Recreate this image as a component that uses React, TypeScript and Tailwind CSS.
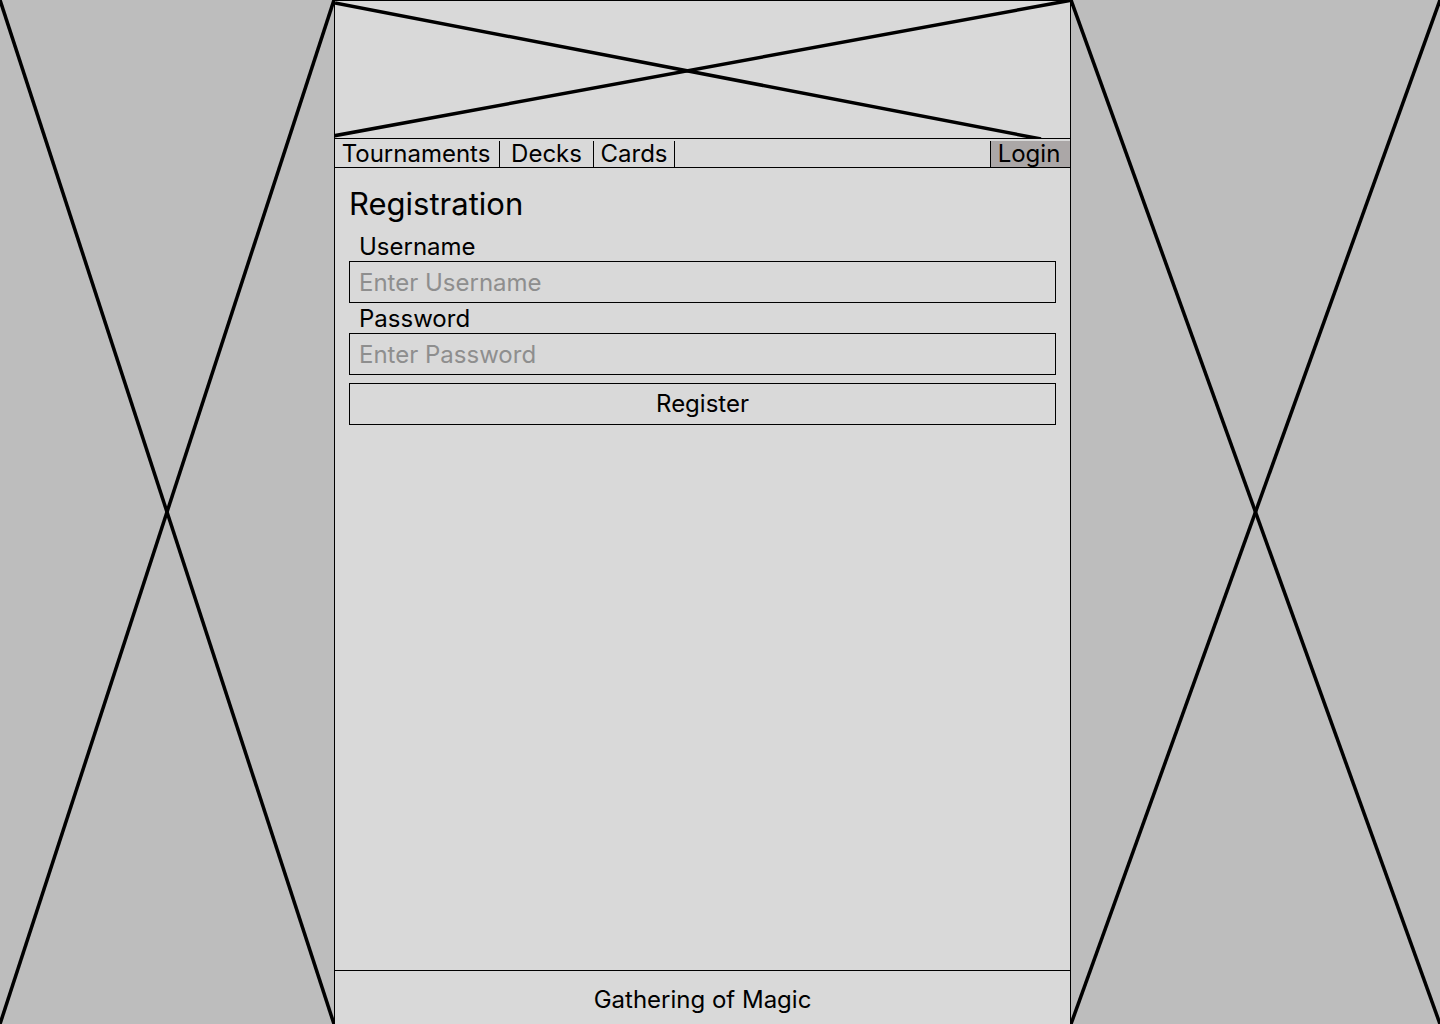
import React from "react";

function SideX({ w }: { w: number }) {
  return (
    <svg width={w} height={1024} viewBox={`0 0 ${w} 1024`} className="block">
      <line x1={0} y1={0} x2={w} y2={1024} stroke="#000" strokeWidth={3.5} />
      <line x1={w} y1={0} x2={0} y2={1024} stroke="#000" strokeWidth={3.5} />
    </svg>
  );
}

export default function App() {
  return (
    <div
      className="flex h-[1024px] w-[1440px] overflow-hidden bg-[#bdbdbd] text-black"
      style={{ fontFamily: "Inter, 'Noto Sans', sans-serif" }}
    >
      <div className="w-[334px] shrink-0">
        <SideX w={334} />
      </div>
      <div className="flex h-[1024px] w-[737px] shrink-0 flex-col border-x border-black bg-[#d9d9d9]">
        <div className="h-[138px] shrink-0 border-t border-black">
          <svg width={735} height={137} viewBox="0 0 735 137" className="block">
            <line x1={0} y1={2} x2={706} y2={138} stroke="#000" strokeWidth={3.5} />
            <line x1={-2} y1={135} x2={737} y2={-1} stroke="#000" strokeWidth={3.5} />
          </svg>
        </div>
        <div className="flex h-[30px] shrink-0 border-y border-black pt-[2px] text-[24px] leading-[26px]">
          <div className="flex w-[165px] items-center justify-center border-r border-black pr-[2px]">Tournaments</div>
          <div className="flex w-[94px] items-center justify-center border-r border-black">Decks</div>
          <div className="flex w-[81px] items-center justify-center border-r border-black">Cards</div>
          <div className="flex-1" />
          <div className="flex w-[80px] items-center justify-center border-l border-black bg-[#aba7a7] pr-[3px]">Login</div>
        </div>
        <div className="flex flex-1 flex-col px-[14px] pt-[18px]">
          <div className="text-[31px] leading-[36px]">Registration</div>
          <div className="mt-[9px] h-[30px] pl-[10px] pt-[1px] text-[24px] leading-[30px]">Username</div>
          <input
            className="h-[42px] w-full border border-black bg-transparent pl-[9px] text-[24px] outline-none placeholder:text-[#8e8e8e]"
            placeholder="Enter Username"
            style={{ fontFamily: "Inter, 'Noto Sans', sans-serif" }}
          />
          <div className="h-[30px] pl-[10px] pt-[1px] text-[24px] leading-[30px]">Password</div>
          <input
            className="h-[42px] w-full border border-black bg-transparent pl-[9px] text-[24px] outline-none placeholder:text-[#8e8e8e]"
            placeholder="Enter Password"
            style={{ fontFamily: "Inter, 'Noto Sans', sans-serif" }}
          />
          <button
            className="mt-[8px] h-[42px] w-full border border-black bg-transparent text-[24px]"
            style={{ fontFamily: "Inter, 'Noto Sans', sans-serif" }}
          >
            Register
          </button>
        </div>
        <div className="flex h-[54px] shrink-0 items-center justify-center border-t border-black pt-[5px] text-[24px] leading-[30px]">
          Gathering of Magic
        </div>
      </div>
      <div className="flex-1">
        <SideX w={369} />
      </div>
    </div>
  );
}
